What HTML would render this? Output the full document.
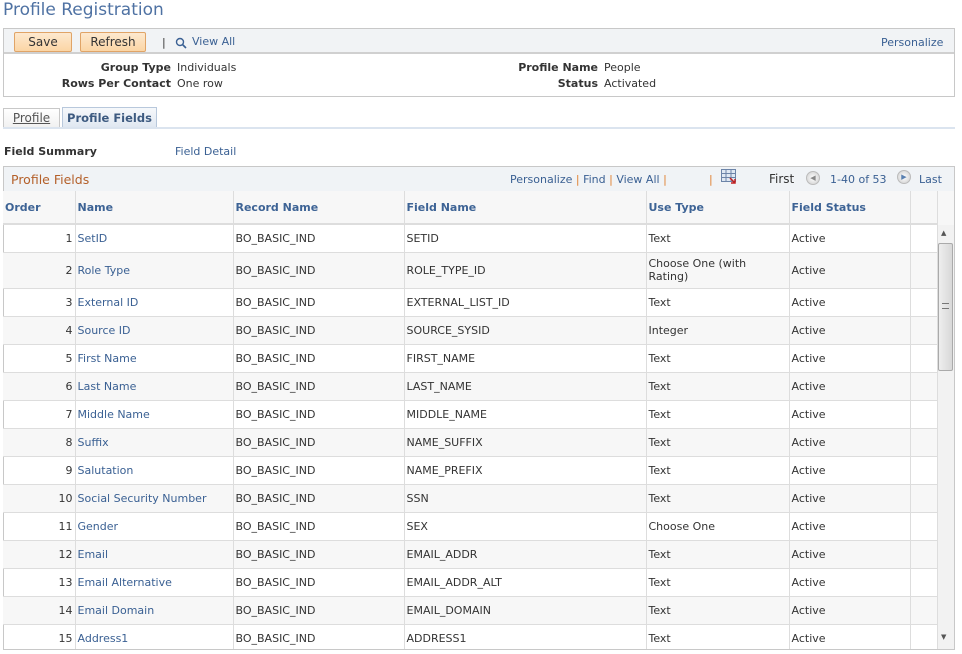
<!DOCTYPE html>
<html><head><style>
*{box-sizing:border-box;margin:0;padding:0}
body{width:962px;height:654px;overflow:hidden;background:#fff;font-family:"DejaVu Sans","Liberation Sans",sans-serif;font-size:11px;color:#333;position:relative}
.a{position:absolute}
a,.lk{color:#3a6093;text-decoration:none}
.btn{position:absolute;top:32px;height:20px;border:1px solid #e0a467;background:linear-gradient(#fde9cf,#fbd5a5);border-radius:2px;font-size:12px;text-align:center;line-height:18px;color:#333}
table{border-collapse:collapse;position:absolute;left:3px;table-layout:fixed}
td{border-right:1px solid #ddd;border-bottom:1px solid #ddd;padding:0 2px;vertical-align:middle;line-height:13px}
th{border-right:1px solid #ddd;text-align:left;padding:0 2px;font-weight:bold;color:#3d6395;background:#f7f7f7}
</style></head><body>
<div class="a" style="left:3px;top:0;font-size:17px;color:#4f72a3;font-family:'DejaVu Sans',sans-serif">Profile Registration</div>
<div class="a" style="left:3px;top:28px;width:952px;height:69px;border:1px solid #c8c8c8"></div>
<div class="a" style="left:4px;top:29px;width:950px;height:25px;background:#f1f3f5;border-bottom:2px solid #d0d0d0"></div>
<div class="btn" style="left:14px;width:58px">Save</div>
<div class="btn" style="left:80px;width:66px">Refresh</div>
<div class="a" style="left:162px;top:36px;color:#333">|</div>
<svg class="a" style="left:175px;top:37px" width="12" height="12"><circle cx="5" cy="5" r="3.5" fill="none" stroke="#3a6093" stroke-width="1.4"/><line x1="7.5" y1="7.5" x2="11" y2="11" stroke="#3a6093" stroke-width="1.6"/></svg>
<div class="a lk" style="left:192px;top:35px">View All</div>
<div class="a lk" style="left:881px;top:36px">Personalize</div>
<div class="a" style="left:0;top:61px;width:171px;text-align:right;font-weight:bold">Group Type</div>
<div class="a" style="left:177px;top:61px">Individuals</div>
<div class="a" style="left:0;top:77px;width:171px;text-align:right;font-weight:bold">Rows Per Contact</div>
<div class="a" style="left:177px;top:77px">One row</div>
<div class="a" style="left:0;top:61px;width:598px;text-align:right;font-weight:bold">Profile Name</div>
<div class="a" style="left:604px;top:61px">People</div>
<div class="a" style="left:0;top:77px;width:598px;text-align:right;font-weight:bold">Status</div>
<div class="a" style="left:604px;top:77px">Activated</div>
<div class="a" style="left:3px;top:108px;width:57px;height:20px;border:1px solid #c8c8c8;border-bottom:none;background:linear-gradient(#fff,#f0f0f0);text-align:center;line-height:19px;font-size:12px;color:#555;text-decoration:underline">Profile</div>
<div class="a" style="left:62px;top:107px;width:95px;height:21px;border:1px solid #b8c8dc;border-bottom:none;background:linear-gradient(#f6f8fb,#dfe7f1);text-align:center;line-height:20px;font-size:11.5px;font-weight:bold;color:#3d5a80">Profile Fields</div>
<div class="a" style="left:3px;top:127px;width:952px;height:2px;background:#dbe4ef"></div>
<div class="a" style="left:4px;top:145px;font-weight:bold">Field Summary</div>
<div class="a" style="left:175px;top:145px;color:#3a6093">Field Detail</div>
<div class="a" style="left:3px;top:166px;width:952px;height:484px;border:1px solid #c8c8c8"></div>
<div class="a" style="left:4px;top:167px;width:950px;height:24px;background:#f0f3f6"></div>
<div class="a" style="left:11px;top:172px;font-size:12.5px;color:#b4602a">Profile Fields</div>
<div class="a" style="left:510px;top:173px;color:#3a6093">Personalize <span style="color:#e08030">|</span> Find <span style="color:#e08030">|</span> View All <span style="color:#e08030">|</span></div>
<div class="a" style="left:709px;top:173px;color:#e08030">|</div>
<svg class="a" style="left:721px;top:169px" width="16" height="15"><rect x="0.5" y="0.5" width="14" height="12" fill="#dfe8f3" stroke="#6c84a8"/><path d="M0 4.5H15M0 8.5H15M5 0V13M10 0V13" stroke="#6c84a8"/><path d="M9 9l5 5M14 10v4h-4" stroke="#c02020" stroke-width="1.5" fill="none"/></svg>
<div class="a" style="left:769px;top:172px;font-size:12px">First</div>
<div class="a" style="left:806px;top:171px;width:14px;height:14px;border-radius:50%;background:radial-gradient(#fff,#ccc);border:1px solid #bbb;font-size:7px;color:#888;text-align:center;line-height:12px">◀</div>
<div class="a" style="left:830px;top:173px;color:#3a6093">1-40 of 53</div>
<div class="a" style="left:897px;top:170px;width:14px;height:14px;border-radius:50%;background:radial-gradient(#fff,#ccc);border:1px solid #bbb;font-size:7px;color:#5a80b0;text-align:center;line-height:12px">▶</div>
<div class="a lk" style="left:919px;top:173px">Last</div>
<div class="a" style="left:3px;top:191px;width:952px;height:458px;overflow:hidden">
<table style="top:0;left:0;width:934px">
<colgroup><col style="width:72px"><col style="width:158px"><col style="width:171px"><col style="width:242px"><col style="width:143px"><col style="width:121px"><col style="width:27px"></colgroup>
<tr style="height:33px;border-bottom:2px solid #ddd"><th style="padding-left:2px">Order</th><th>Name</th><th>Record Name</th><th>Field Name</th><th>Use Type</th><th>Field Status</th><th></th></tr>
<tr style="height:28px"><td style="text-align:right">1</td><td class="lk">SetID</td><td>BO_BASIC_IND</td><td>SETID</td><td>Text</td><td>Active</td><td></td></tr>
<tr style="height:36px;background:#f7f7f7"><td style="text-align:right">2</td><td class="lk">Role Type</td><td>BO_BASIC_IND</td><td>ROLE_TYPE_ID</td><td>Choose One (with Rating)</td><td>Active</td><td></td></tr>
<tr style="height:28px"><td style="text-align:right">3</td><td class="lk">External ID</td><td>BO_BASIC_IND</td><td>EXTERNAL_LIST_ID</td><td>Text</td><td>Active</td><td></td></tr>
<tr style="height:28px;background:#f7f7f7"><td style="text-align:right">4</td><td class="lk">Source ID</td><td>BO_BASIC_IND</td><td>SOURCE_SYSID</td><td>Integer</td><td>Active</td><td></td></tr>
<tr style="height:28px"><td style="text-align:right">5</td><td class="lk">First Name</td><td>BO_BASIC_IND</td><td>FIRST_NAME</td><td>Text</td><td>Active</td><td></td></tr>
<tr style="height:28px;background:#f7f7f7"><td style="text-align:right">6</td><td class="lk">Last Name</td><td>BO_BASIC_IND</td><td>LAST_NAME</td><td>Text</td><td>Active</td><td></td></tr>
<tr style="height:28px"><td style="text-align:right">7</td><td class="lk">Middle Name</td><td>BO_BASIC_IND</td><td>MIDDLE_NAME</td><td>Text</td><td>Active</td><td></td></tr>
<tr style="height:28px;background:#f7f7f7"><td style="text-align:right">8</td><td class="lk">Suffix</td><td>BO_BASIC_IND</td><td>NAME_SUFFIX</td><td>Text</td><td>Active</td><td></td></tr>
<tr style="height:28px"><td style="text-align:right">9</td><td class="lk">Salutation</td><td>BO_BASIC_IND</td><td>NAME_PREFIX</td><td>Text</td><td>Active</td><td></td></tr>
<tr style="height:28px;background:#f7f7f7"><td style="text-align:right">10</td><td class="lk">Social Security Number</td><td>BO_BASIC_IND</td><td>SSN</td><td>Text</td><td>Active</td><td></td></tr>
<tr style="height:28px"><td style="text-align:right">11</td><td class="lk">Gender</td><td>BO_BASIC_IND</td><td>SEX</td><td>Choose One</td><td>Active</td><td></td></tr>
<tr style="height:28px;background:#f7f7f7"><td style="text-align:right">12</td><td class="lk">Email</td><td>BO_BASIC_IND</td><td>EMAIL_ADDR</td><td>Text</td><td>Active</td><td></td></tr>
<tr style="height:28px"><td style="text-align:right">13</td><td class="lk">Email Alternative</td><td>BO_BASIC_IND</td><td>EMAIL_ADDR_ALT</td><td>Text</td><td>Active</td><td></td></tr>
<tr style="height:28px;background:#f7f7f7"><td style="text-align:right">14</td><td class="lk">Email Domain</td><td>BO_BASIC_IND</td><td>EMAIL_DOMAIN</td><td>Text</td><td>Active</td><td></td></tr>
<tr style="height:28px"><td style="text-align:right">15</td><td class="lk">Address1</td><td>BO_BASIC_IND</td><td>ADDRESS1</td><td>Text</td><td>Active</td><td></td></tr>
</table></div>
<div class="a" style="left:937px;top:191px;width:17px;height:34px;background:#f7f7f7;border-left:1px solid #ddd"></div>
<div class="a" style="left:937px;top:225px;width:17px;height:424px;background:#f2f2f2;border-left:1px solid #ddd"></div>
<div class="a" style="left:941px;top:229px;font-size:7px;color:#555">▲</div>
<div class="a" style="left:941px;top:633px;font-size:7px;color:#555">▼</div>
<div class="a" style="left:938px;top:243px;width:15px;height:128px;border:1px solid #aaa;border-radius:2px;background:linear-gradient(90deg,#eee,#d8d8d8)"></div>
<div class="a" style="left:942px;top:303px;width:7px;height:6px;border-top:1px solid #777;border-bottom:1px solid #777"></div>
</body></html>
